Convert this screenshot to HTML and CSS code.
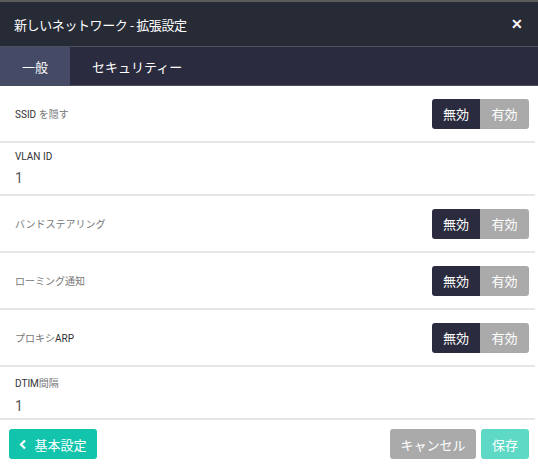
FILE: index.html
```html
<!DOCTYPE html>
<html lang="ja">
<head>
    <meta charset="UTF-8">
    <meta name="viewport" content="width=device-width, initial-scale=1.0">
    <title>新しいネットワーク - 拡張設定</title>
    <link rel="stylesheet" href="styles.css">
</head>
<body>
    <div class="modal">
        <div class="modal-header">
            <div class="modal-title">新しいネットワーク - 拡張設定</div>
            <button class="close-btn">&#x2715;</button>
        </div>

        <div class="tabs">
            <div class="tab active">一般</div>
            <div class="tab">セキュリティー</div>
        </div>

        <div class="modal-body">
            <div class="row">
                <div class="label">SSID <span class="jp">を隠す</span></div>
                <div class="toggle">
                    <span class="opt on">無効</span>
                    <span class="opt">有効</span>
                </div>
            </div>
            <div class="row field">
                <div class="label">VLAN ID</div>
                <div class="value">1</div>
            </div>
            <div class="row">
                <div class="label jp">バンドステアリング</div>
                <div class="toggle">
                    <span class="opt on">無効</span>
                    <span class="opt">有効</span>
                </div>
            </div>
            <div class="row">
                <div class="label jp">ローミング通知</div>
                <div class="toggle">
                    <span class="opt on">無効</span>
                    <span class="opt">有効</span>
                </div>
            </div>
            <div class="row">
                <div class="label"><span class="jp">プロキシ</span>ARP</div>
                <div class="toggle">
                    <span class="opt on">無効</span>
                    <span class="opt">有効</span>
                </div>
            </div>
            <div class="row field">
                <div class="label">DTIM<span class="jp">間隔</span></div>
                <div class="value">1</div>
            </div>
        </div>

        <div class="modal-footer">
            <button class="btn btn-back">
                <svg width="8" height="11" viewBox="0 0 8 11"><path d="M6 1.5 L2 5.5 L6 9.5" fill="none" stroke="#fff" stroke-width="2.2"/></svg>
                基本設定
            </button>
            <div class="footer-right">
                <button class="btn btn-cancel">キャンセル</button>
                <button class="btn btn-save">保存</button>
            </div>
        </div>
    </div>
</body>
</html>
```

FILE: styles.css
```css
body {
    margin: 0;
    padding: 0;
    font-family: Roboto, "Noto Sans CJK JP", sans-serif;
    background-color: #ffffff;
}
.modal {
    width: 538px;
    border-top: 2px solid #5b5b5b;
    box-sizing: border-box;
}
.modal-header {
    display: flex;
    align-items: center;
    justify-content: space-between;
    height: 44px;
    padding: 0 14px;
    background-color: #262b36;
    border-bottom: 1px solid #4d515c;
}
.modal-title {
    color: #ffffff;
    font-size: 13px;
    letter-spacing: -0.4px;
}
.close-btn {
    border: none;
    background: none;
    color: #ffffff;
    font-size: 14px;
    font-weight: bold;
    padding: 0;
    margin-right: 1px;
    cursor: pointer;
}
.tabs {
    display: flex;
    height: 38px;
    background-color: #2a2b3e;
    border-bottom: 1px solid #4a4d5c;
}
.tab {
    display: flex;
    align-items: center;
    padding: 0 22px;
    color: #ffffff;
    font-size: 13px;
}
.tab.active {
    background-color: #454b66;
}
.modal-body {
    padding-right: 3px;
}
.row {
    display: flex;
    align-items: center;
    justify-content: space-between;
    height: 55px;
    padding: 0 6px 0 15px;
    border-bottom: 2px solid #e6e6e6;
}
.row.field {
    flex-direction: column;
    align-items: flex-start;
    justify-content: flex-start;
    height: 53px;
    padding-top: 8px;
    box-sizing: border-box;
}
.label {
    font-size: 10px;
    color: #333333;
}
.jp {
    color: #777777;
}
.value {
    margin-top: 8px;
    font-size: 14px;
    color: #555555;
}
.toggle {
    display: flex;
    height: 30px;
    border-radius: 3px;
    overflow: hidden;
}
.opt {
    display: flex;
    align-items: center;
    justify-content: center;
    width: 48px;
    background-color: #aaaaaa;
    color: #ffffff;
    font-size: 13px;
}
.opt.on {
    background-color: #2a2b3e;
}
.opt + .opt {
    width: 49px;
}
.modal-footer {
    display: flex;
    justify-content: space-between;
    align-items: center;
    padding: 9px 9px 0 9px;
}
.footer-right {
    display: flex;
    gap: 5px;
}
.btn {
    display: flex;
    align-items: center;
    justify-content: center;
    gap: 7px;
    height: 30px;
    border: none;
    border-radius: 3px;
    color: #ffffff;
    font-family: Roboto, "Noto Sans CJK JP", sans-serif;
    font-size: 13px;
    white-space: nowrap;
    box-sizing: border-box;
    padding: 0;
    cursor: pointer;
}
.btn-back {
    width: 88px;
    background-color: #13c4ad;
}
.btn-cancel {
    width: 86px;
    background-color: #aaaaaa;
}
.btn-save {
    width: 48px;
    background-color: #5dd9c6;
}
```
